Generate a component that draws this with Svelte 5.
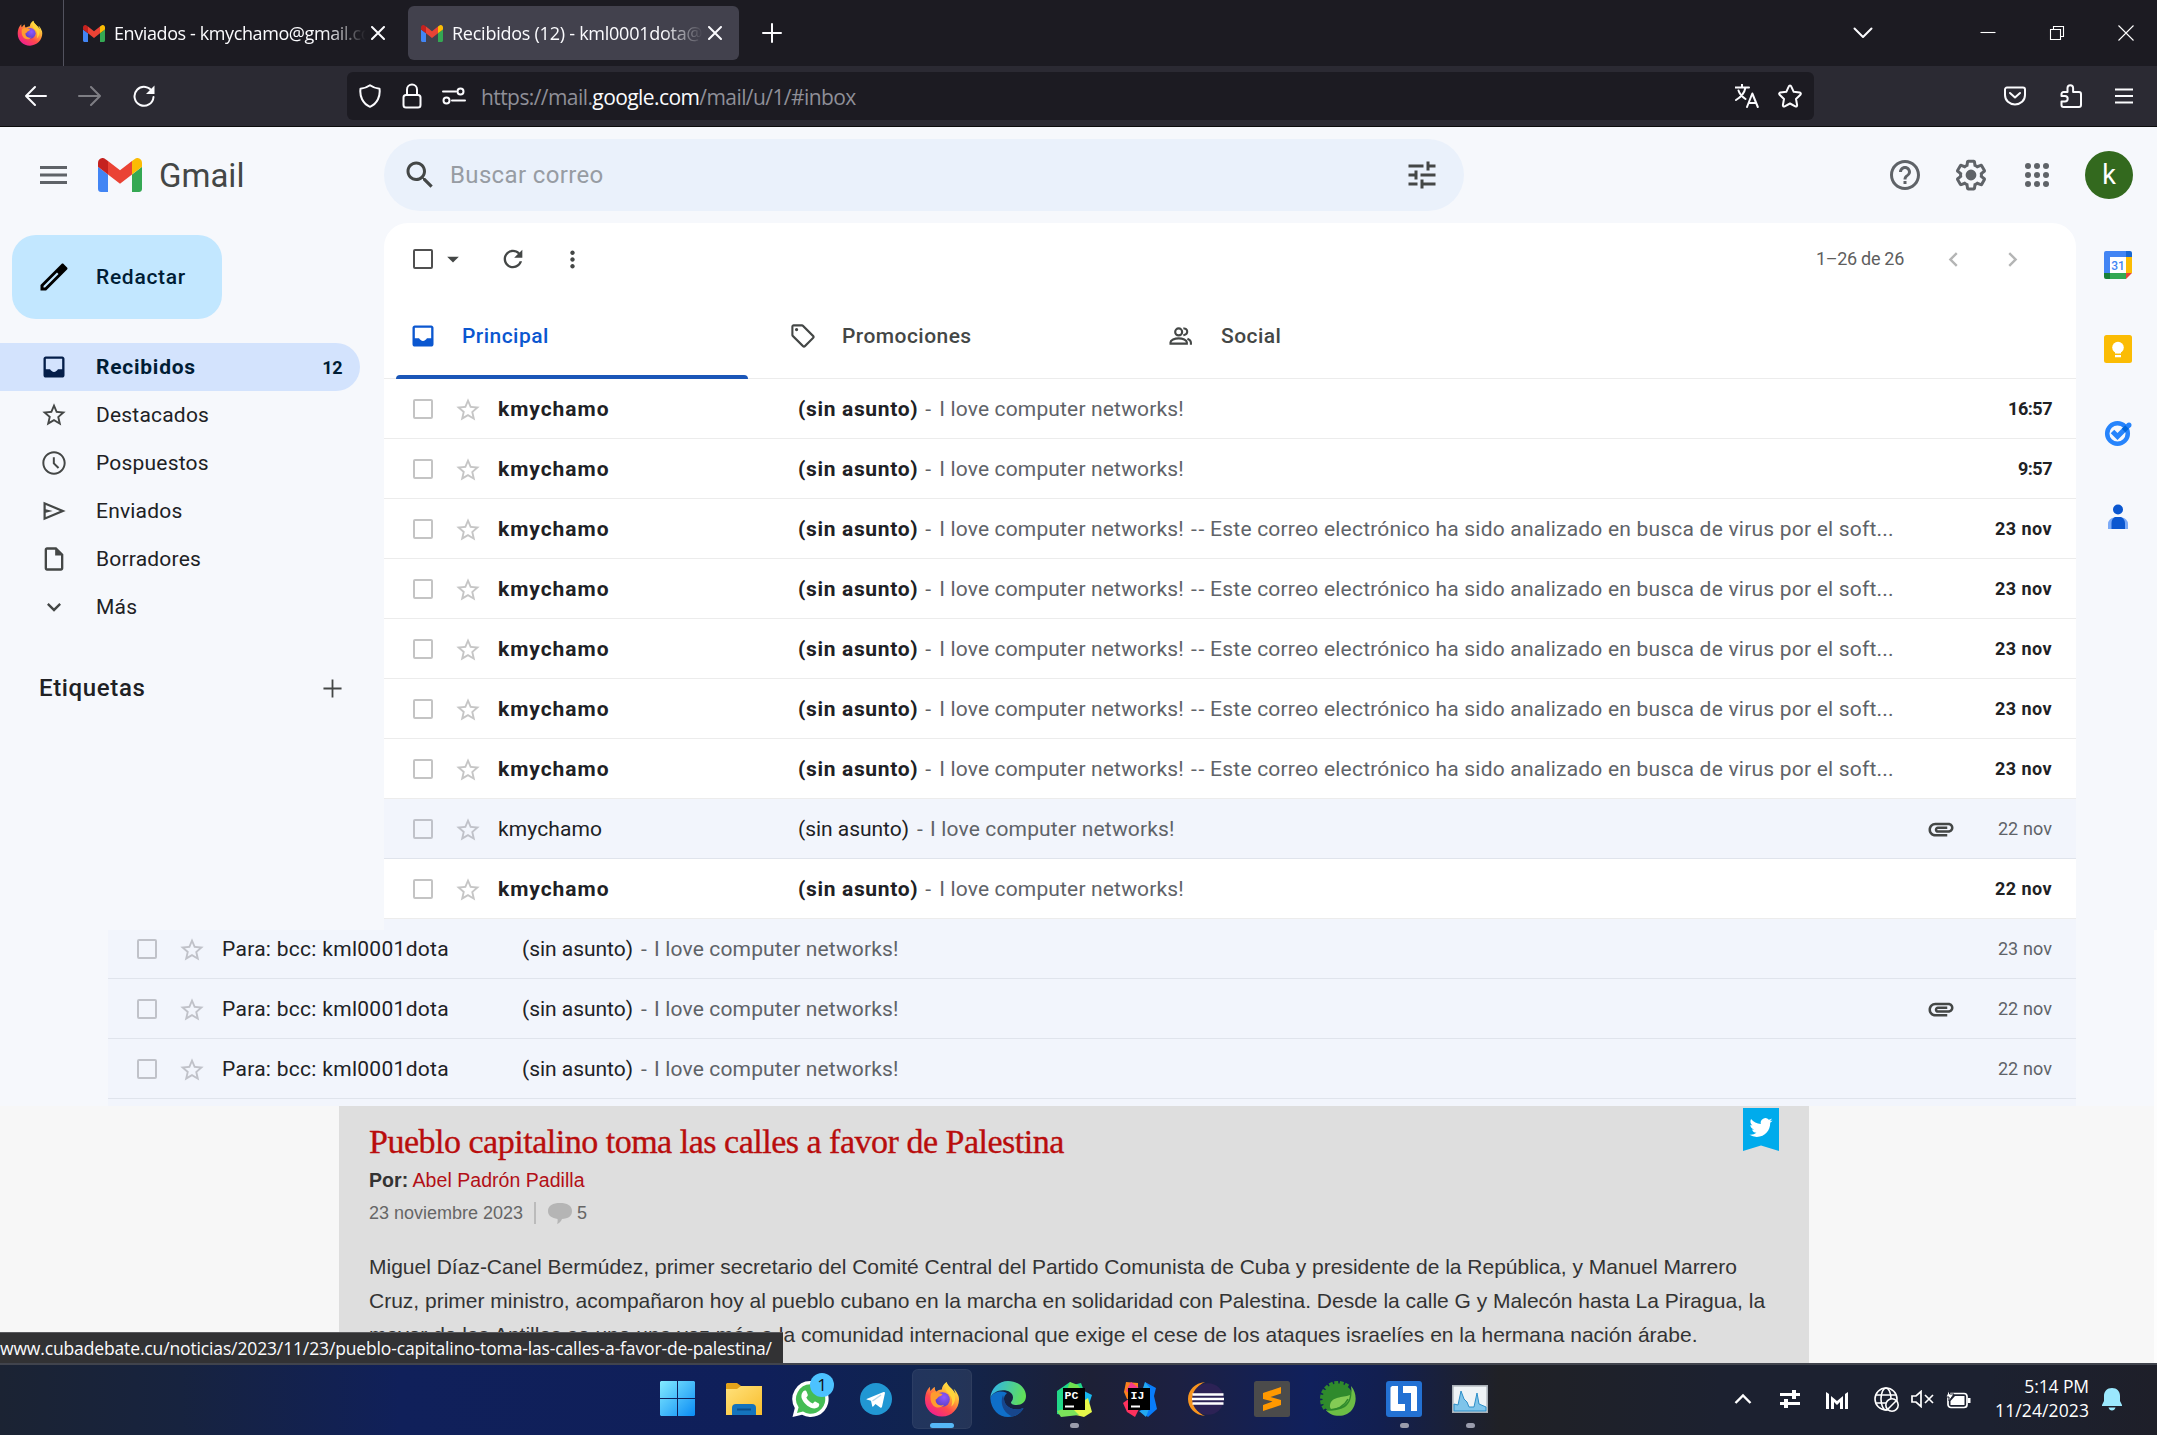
<script>
  const paths = {
    inbox: 'M19 3H5c-1.1 0-2 .9-2 2v14c0 1.1.9 2 2 2h14c1.1 0 2-.9 2-2V5c0-1.1-.9-2-2-2zM5 5h14v9h-3.6c-.7 1.3-2 2.2-3.4 2.2S9.300 15.300 8.600 14H5z',
    star: 'M22 9.240l-7.190-.62L12 2 9.190 8.630 2 9.240l5.460 4.730L5.820 21 12 17.270 18.180 21l-1.630-7.030L22 9.240zM12 15.400l-3.760 2.270 1-4.280-3.320-2.880 4.380-.38L12 6.100l1.710 4.040 4.380.38-3.320 2.880 1 4.280L12 15.400z',
    clock: 'M12 2C6.470 2 2 6.480 2 12s4.470 10 10 10 10-4.480 10-10S17.520 2 12 2zM12 20.300c-4.600 0-8.300-3.700-8.300-8.300S7.400 3.700 12 3.700s8.300 3.700 8.300 8.300-3.700 8.300-8.300 8.300zM12.700 7H11v5.600l4.300 4.300 1.200-1.200-3.800-3.800z',
    send: 'M3 4l19 8-19 8V4zm1.900 2.900v3.600l6 1.500-6 1.500v3.600L17.100 12z',
    draft: 'M14 2H6c-1.100 0-2 .9-2 2v16c0 1.100.9 2 2 2h12c1.100 0 2-.9 2-2V8l-6-6zM6 20V4h7v5h5v11H6z',
    more: 'M7.410 8.590L12 13.170l4.590-4.580L18 10l-6 6-6-6z',
    search: 'M15.500 14h-.79l-.28-.27C15.410 12.590 16 11.110 16 9.500 16 5.910 13.090 3 9.500 3S3 5.910 3 9.500 5.910 16 9.500 16c1.610 0 3.090-.59 4.230-1.570l.27.28v.79l5 4.990L20.490 19l-4.990-5zm-6 0C7.010 14 5 11.990 5 9.500S7.010 5 9.500 5 14 7.010 14 9.500 11.990 14 9.500 14z',
    tune: 'M3 17v2h6v-2H3zM3 5v2h10V5H3zm10 16v-2h8v-2h-8v-2h-2v6h2zM7 9v2H3v2h4v2h2V9H7zm14 4v-2H11v2h10zm-6-4h2V7h4V5h-4V3h-2v6z',
    help: 'M11 18h2v-2h-2v2zm1-16C6.480 2 2 6.480 2 12s4.480 10 10 10 10-4.480 10-10S17.520 2 12 2zm0 18c-4.410 0-8-3.590-8-8s3.590-8 8-8 8 3.590 8 8-3.590 8-8 8zm0-14c-2.210 0-4 1.790-4 4h2c0-1.100.9-2 2-2s2 .9 2 2c0 2-3 1.750-3 5h2c0-2.250 3-2.500 3-5 0-2.210-1.790-4-4-4z',
    gear: 'M13.850 22.250h-3.700c-.74 0-1.360-.54-1.450-1.270l-.27-1.890c-.27-.14-.53-.29-.79-.46l-1.800.72c-.7.26-1.470-.03-1.810-.65L2.200 15.530c-.35-.66-.2-1.440.36-1.880l1.530-1.190c-.01-.15-.02-.3-.02-.46 0-.15.01-.31.02-.46l-1.520-1.190c-.59-.45-.74-1.260-.37-1.880l1.850-3.190c.34-.62 1.110-.9 1.790-.63l1.810.73c.26-.17.52-.32.78-.46l.27-1.910c.09-.7.71-1.250 1.440-1.250h3.700c.74 0 1.360.54 1.450 1.270l.27 1.890c.27.14.53.29.79.46l1.800-.72c.71-.26 1.480.03 1.820.65l1.840 3.180c.36.66.2 1.440-.36 1.880l-1.520 1.190c.01.15.02.3.02.46s-.01.31-.02.46l1.520 1.190c.56.45.72 1.230.37 1.860l-1.860 3.220c-.34.62-1.110.9-1.800.63l-1.800-.72c-.26.17-.52.32-.78.46l-.27 1.910c-.1.68-.72 1.220-1.460 1.220zm-3.230-2h2.760l.37-2.550.53-.22c.44-.18.88-.44 1.340-.78l.45-.34 2.380.96 1.380-2.400-2.030-1.580.07-.56c.03-.26.06-.51.06-.78s-.03-.53-.06-.78l-.07-.56 2.030-1.580-1.390-2.400-2.390.96-.45-.35c-.42-.32-.87-.58-1.330-.77l-.52-.22-.37-2.550h-2.760l-.37 2.550-.53.21c-.44.19-.88.44-1.340.79l-.45.33-2.380-.95-1.390 2.390 2.030 1.580-.07.56a7 7 0 0 0-.06.79c0 .26.02.53.06.78l.07.56-2.030 1.580 1.380 2.400 2.390-.96.45.35c.43.33.86.58 1.330.77l.53.22.38 2.550zM15.600 12a3.600 3.600 0 1 1-7.200 0 3.600 3.600 0 0 1 7.200 0z',
    refresh: 'M17.650 6.350C16.200 4.900 14.210 4 12 4c-4.420 0-7.990 3.580-7.990 8s3.570 8 7.990 8c3.730 0 6.840-2.550 7.730-6h-2.080c-.82 2.330-3.040 4-5.650 4-3.310 0-6-2.690-6-6s2.690-6 6-6c1.660 0 3.140.69 4.220 1.780L13 11h7V4l-2.350 2.350z',
    tag: 'M21.410 11.410l-8.830-8.830c-.37-.37-.88-.58-1.410-.58H4c-1.100 0-2 .9-2 2v7.170c0 .53.21 1.040.59 1.410l8.830 8.830c.78.78 2.050.78 2.830 0l7.170-7.170c.78-.78.78-2.040-.01-2.830zM12.830 20.200L3.800 11.170V3.800h7.370l9.030 9.030zM7.900 6.500a1.400 1.400 0 1 1-2.800 0 1.400 1.400 0 0 1 2.800 0z',
    left: 'M15.410 7.410L14 6l-6 6 6 6 1.410-1.410L10.830 12z',
    right: 'M8.590 7.410L10 6l6 6-6 6-1.410-1.410L13.170 12z',
    clip: 'M2 12.500C2 9.460 4.460 7 7.500 7H18c2.210 0 4 1.790 4 4s-1.790 4-4 4H9.500C8.120 15 7 13.880 7 12.500S8.120 10 9.500 10H17v2H9.410c-.55 0-.55 1 0 1H18c1.100 0 2-.9 2-2s-.9-2-2-2H7.500C5.570 9 4 10.570 4 12.500S5.570 16 7.500 16H17v2H7.500C4.460 18 2 15.540 2 12.500z',
    pencil: 'M3 17.250V21h3.750L20.700 7.050c.4-.4.4-1 0-1.400l-2.300-2.300c-.4-.4-1-.4-1.400 0L3 17.250zm3 1.700H5v-1l9-9 1 1-9 9z',
    plus: 'M19 12.700h-6.300V19h-1.400v-6.300H5v-1.400h6.300V5h1.400v6.300H19z',
    caret: 'M7 10l5 5 5-5z',
    dots: 'M12 8c1.100 0 2-.9 2-2s-.9-2-2-2-2 .9-2 2 .9 2 2 2zm0 2c-1.100 0-2 .9-2 2s.9 2 2 2 2-.9 2-2-.9-2-2-2zm0 6c-1.100 0-2 .9-2 2s.9 2 2 2 2-.9 2-2-.9-2-2-2z'
  };

  const folders = [
    { icon: 'inbox', label: 'Recibidos', count: 12, active: true },
    { icon: 'star', label: 'Destacados' },
    { icon: 'clock', label: 'Pospuestos' },
    { icon: 'send', label: 'Enviados' },
    { icon: 'draft', label: 'Borradores' },
    { icon: 'more', label: 'Más' }
  ];

  const love = 'I love computer networks!';
  const scan = 'Este correo electrónico ha sido analizado en busca de virus por el soft...';
  const inbox = [
    { date: '16:57', today: true },
    { date: '9:57', today: true },
    { tail: scan, date: '23 nov' },
    { tail: scan, date: '23 nov' },
    { tail: scan, date: '23 nov' },
    { tail: scan, date: '23 nov' },
    { tail: scan, date: '23 nov' },
    { date: '22 nov', read: true, clip: true },
    { date: '22 nov' }
  ].map((m) => ({ ...m, from: 'kmychamo', text: love }));
  const sent = [
    { date: '23 nov' },
    { date: '22 nov', clip: true },
    { date: '22 nov' }
  ].map((m) => ({ ...m, from: 'Para: bcc: kml0001dota', text: love, read: true }));

  const dotGrid = [3, 12, 21];
  const teeth = Array.from({ length: 9 }, (_, i) => 150 + i * 19);
</script>

{#snippet icon(name, size)}
  <svg width={size} height={size} viewBox="0 0 24 24" fill="currentColor" fill-rule="evenodd"><path d={paths[name]} /></svg>
{/snippet}

{#snippet gmail(w, h)}
  <svg width={w} height={h} viewBox="52 42 88 66" preserveAspectRatio="none">
    <path fill="#4285f4" d="M58 108h14V74L52 59v43c0 3.320 2.690 6 6 6" />
    <path fill="#34a853" d="M120 108h14c3.320 0 6-2.690 6-6V59l-20 15" />
    <path fill="#fbbc04" d="M120 48v26l20-15v-8c0-7.420-8.470-11.650-14.400-7.200" />
    <path fill="#ea4335" d="M72 74V48l24 18 24-18v26L96 92" />
    <path fill="#c5221f" d="M52 51v8l20 15V48l-5.600-4.200c-5.940-4.450-14.400-.22-14.400 7.200" />
  </svg>
{/snippet}

{#snippet firefox(size, id)}
  <svg width={size} height={size} viewBox="0 0 36 36">
    <defs>
      <linearGradient id={id + 'a'} x1=".85" y1=".1" x2=".25" y2=".95">
        <stop offset="0" stop-color="#fff44f" /><stop offset=".35" stop-color="#ffa436" />
        <stop offset=".65" stop-color="#ff4a4c" /><stop offset="1" stop-color="#f0218b" />
      </linearGradient>
      <radialGradient id={id + 'b'} cx=".6" cy=".35" r=".7">
        <stop offset="0" stop-color="#9059ff" /><stop offset="1" stop-color="#5b3fc4" />
      </radialGradient>
    </defs>
    <path fill="url(#{id}a)" d="M33.500 13c-.8-2-2.500-4.200-3.800-4.900 1 2 1.600 3.500 1.700 4.700C29 7.500 24 6.200 22.500 1c-3 2-4.500 5-4.700 7.500-2.200.1-4 .8-5.500 1.900-1-.5-1.800-2.400-1.300-4.300C8.800 7 7.300 9 6.600 10c-.8-1-.7-3.400-.5-4.200C4 7.400 1 12 1 19c0 9.400 7.600 16.500 17 16.500S35 28 35 18.500c0-2-.5-4-1.500-5.500z" />
    <circle cx="18.500" cy="18.500" r="7.300" fill="url(#{id}b)" />
    <path fill="#ff9b2f" d="M7 12.500c2-1.800 4.500-1.600 6.500-.8 2.200.4 3.800 1 5 1.500-.4 1.300-2 1.800-3.500 2.300-1.200.6-1.600 2.600-3.500 3.300 0 4.500 4.500 7 8.500 5-2 3.200-8 4-11 .5-2.600-3-3.200-8-2-11.800z" />
    <path fill="#ffd43a" d="M22.500 1c1.500 5.200 6.500 6.500 8.300 12.500 1.200 4.500-.3 9.500-3.500 12 1.600-4 1.200-8.500-1.500-11.500-3-3.200-6.500-6.500-3.300-13z" />
  </svg>
{/snippet}

{#snippet row(m)}
  <div class="row" class:read={m.read}>
    <span class="box"></span>
    <span class="rowstar">{@render icon('star', 28)}</span>
    <span class="from">{m.from}</span>
    <span class="subject"><b>(sin asunto)</b><i>-</i><span>{m.text}</span>{#if m.tail}<em>--</em><span>{m.tail}</span>{/if}</span>
    <span class="attach">{#if m.clip}{@render icon('clip', 30)}{/if}</span>
    <span class="date" class:today={m.today}>{m.date}</span>
  </div>
{/snippet}

<div class="screen">
  <div class="tabbar">
    <div class="pinned">{@render firefox(26, 'ffs')}</div>
    <div class="tab first">
      {@render gmail(22, 17)}
      <span class="title">Enviados - kmychamo@gmail.com</span>
      <svg width="14" height="14" viewBox="0 0 14 14"><path class="line" d="M1 1l12 12M13 1L1 13" /></svg>
    </div>
    <div class="tab selected">
      {@render gmail(22, 17)}
      <span class="title">Recibidos (12) - kml0001dota@gmail</span>
      <svg width="14" height="14" viewBox="0 0 14 14"><path class="line" d="M1 1l12 12M13 1L1 13" /></svg>
    </div>
    <svg class="newtab" width="20" height="20" viewBox="0 0 20 20"><path class="line" d="M10 1v18M1 10h18" /></svg>
    <div class="wincontrols">
      <svg width="20" height="20" viewBox="0 0 20 20"><path class="line" d="M1.500 5.500l8.500 8.500 8.500-8.500" /></svg>
      <svg width="16" height="16" viewBox="0 0 16 16"><path class="thin" d="M.5 7.500h15" /></svg>
      <svg width="16" height="16" viewBox="0 0 16 16"><path class="thin" d="M1.500 4.500h10v10h-10zM4.500 4V1.500h10v10H12" /></svg>
      <svg width="16" height="16" viewBox="0 0 16 16"><path class="thin" d="M.5.5l15 15M15.500.5l-15 15" /></svg>
    </div>
  </div>

  <div class="navbar">
    <div class="navbuttons">
      <svg width="24" height="24" viewBox="0 0 24 24"><path class="line" d="M22 12H2M11 3l-9 9 9 9" /></svg>
      <svg class="off" width="24" height="24" viewBox="0 0 24 24"><path class="line" d="M1 12h21M13 3l9 9-9 9" /></svg>
      <svg width="24" height="24" viewBox="0 0 24 24"><path class="line" d="M20.500 8A9.500 9.500 0 1 0 21.500 13" /><path fill="#fbfbfe" d="M22.500 1.500v8.500H14z" /></svg>
    </div>
    <div class="urlbar">
      <svg width="24" height="24" viewBox="0 0 24 24"><path class="line" d="M12 1.200C9.500 3 6 4.300 2.500 4.700 1.500 12 4.500 19.500 12 22.800 19.500 19.500 22.500 12 21.500 4.700 18 4.300 14.500 3 12 1.200z" /></svg>
      <svg width="20" height="26" viewBox="0 0 20 26"><rect class="line" x="1.500" y="12" width="17" height="12.500" rx="2.500" /><path class="line" d="M5 12V6.500a5 5 0 0 1 10 0V12" /></svg>
      <svg width="24" height="18" viewBox="0 0 24 18"><path class="line" d="M1 4.500h13M10 13.500h13" /><circle class="line" cx="18.500" cy="4.500" r="3" /><circle class="line" cx="4.500" cy="13.500" r="3" /></svg>
      <span class="url">https://mail.<b>google.com</b>/mail/u/1/#inbox</span>
      <svg width="24" height="24" viewBox="0 0 24 24"><path class="line" d="M0 3.500h14M7 .5v3M10.500 3.500C9.500 9 6 13 1 16M3.500 6.500c1 3.500 4 6.500 7 8.500" /><path class="line" d="M12 23l5.300-13.500L22.800 23M13.700 19h7.300" /></svg>
      <svg width="24" height="24" viewBox="0 0 24 24"><path class="line" d="M12 1.500c.6 0 1 .4 1.200.9l2.500 5.400 6 .8c1.200.2 1.500 1.300.7 2.100L18 15l1.100 6c.2 1.200-.8 1.900-1.800 1.400L12 19.500l-5.300 2.900c-1 .5-2-.2-1.800-1.400L6 15l-4.400-4.300c-.8-.8-.5-1.900.7-2.100l6-.8 2.500-5.400c.2-.5.600-.9 1.200-.9z" /></svg>
    </div>
    <div class="navtools">
      <svg width="24" height="20" viewBox="0 0 24 20"><path class="line" d="M4 1.500h16a2 2 0 0 1 2 2V9c0 5.500-4.500 9.500-10 9.500S2 14.500 2 9V3.500a2 2 0 0 1 2-2zM7 7l5 4.500L17 7" /></svg>
      <svg width="22" height="24" viewBox="0 0 22 24"><path class="line" d="M3.500 8h4V4a2.800 2.800 0 0 1 5.600 0v4H19a2 2 0 0 1 2 2v11a2 2 0 0 1-2 2H3.500a2 2 0 0 1-2-2v-3.500H5a2.700 2.700 0 0 0 0-5.400H1.500V10a2 2 0 0 1 2-2z" /></svg>
      <svg width="18" height="16" viewBox="0 0 18 16"><path class="line" d="M0 1.500h18M0 8h18M0 14.500h18" /></svg>
    </div>
  </div>

  <div class="mail">
    <header>
      <svg class="burger" width="27" height="18" viewBox="0 0 27 18"><path fill="#5f6368" d="M0 0h27v3H0zM0 7.500h27v3H0zM0 15h27v3H0z" /></svg>
      <span class="logo">{@render gmail(44, 34)}</span>
      <span class="brand">Gmail</span>
      <div class="search">
        {@render icon('search', 36)}
        <span class="hint">Buscar correo</span>
        {@render icon('tune', 36)}
      </div>
      <div class="account">
        {@render icon('help', 36)}
        {@render icon('gear', 36)}
        <svg width="24" height="24" viewBox="0 0 24 24" fill="#5f6368">
          {#each dotGrid as y}{#each dotGrid as x}<circle cx={x} cy={y} r="3" />{/each}{/each}
        </svg>
        <span class="avatar">k</span>
      </div>
    </header>

    <div class="body">
      <aside>
        <button class="compose">{@render icon('pencil', 36)}<span>Redactar</span></button>
        <nav>
          {#each folders as f}
            <div class="folder" class:active={f.active}>
              <span class="ficon">{@render icon(f.icon, 28)}</span>
              <span class="fname">{f.label}</span>
              {#if f.count}<span class="count">{f.count}</span>{/if}
            </div>
          {/each}
        </nav>
        <div class="labels"><span>Etiquetas</span>{@render icon('plus', 31)}</div>
      </aside>

      <main>
        <div class="toolbar">
          <span class="box"></span>
          <span class="tcaret">{@render icon('caret', 28)}</span>
          <span class="trefresh">{@render icon('refresh', 28)}</span>
          <span class="tdots">{@render icon('dots', 27)}</span>
          <span class="range">1–26 de 26</span>
          {@render icon('left', 29)}
          {@render icon('right', 29)}
        </div>
        <div class="categories">
          <div class="category current">{@render icon('inbox', 28)}<span>Principal</span></div>
          <div class="category">{@render icon('tag', 28)}<span>Promociones</span></div>
          <div class="category">
            <svg width="28" height="28" viewBox="0 0 24 24" fill="none" stroke="currentColor" stroke-width="1.800"><circle cx="10" cy="8.500" r="3" /><path d="M3 18.500v-1.200c0-1.800 3.500-3.300 7-3.300s7 1.500 7 3.300v1.200zM14 5.600c3.800-.8 5 4.900 0 5.800M17.500 14.300c2.500 1 3 2 3 3.500v1.600" /></svg>
            <span>Social</span>
          </div>
        </div>
        {#each inbox as m}{@render row(m)}{/each}
      </main>

      <div class="sidepanel">
        <svg width="28" height="28" viewBox="0 0 28 28">
          <path fill="#4285f4" d="M2 0h20v6H6v16H0V2a2 2 0 0 1 2-2z" /><path fill="#1967d2" d="M22 0h4a2 2 0 0 1 2 2v4h-6z" />
          <path fill="#fbbc04" d="M22 6h6v16h-6z" /><path fill="#34a853" d="M6 22h16v6H6z" /><path fill="#188038" d="M0 22h6v6H2a2 2 0 0 1-2-2z" />
          <path fill="#ea4335" d="M22 28l6-6h-6z" /><path fill="#fff" d="M6 6h16v16H6z" />
          <text class="cal" x="14" y="18.500" text-anchor="middle">31</text>
        </svg>
        <svg width="28" height="28" viewBox="0 0 28 28"><rect width="28" height="28" rx="2.500" fill="#fbbc04" /><circle cx="14" cy="12.500" r="5.800" fill="#fff" /><path fill="#fff" d="M11 15h6v3.500h-6zM11 20h6v2.300h-6z" /></svg>
        <svg width="28" height="28" viewBox="0 0 28 28"><circle cx="13.500" cy="14.500" r="10.300" fill="none" stroke="#2684fc" stroke-width="4.500" /><path fill="none" stroke="#2684fc" stroke-width="5" d="M8.500 12.500l5 5L25 6" /><path fill="none" stroke="#0066da" stroke-width="5" d="M19.500 11.500L23 8" /><circle cx="25" cy="6" r="2.500" fill="#2684fc" /></svg>
        <svg width="28" height="28" viewBox="0 0 28 28"><circle cx="14" cy="6.500" r="5" fill="#0b57d0" /><path fill="#7baaf7" d="M4 26v-5a6.500 6.500 0 0 1 6.500-6.500h7A6.500 6.500 0 0 1 24 21v5z" /><path fill="#0b57d0" d="M7.500 26v-6a7 7 0 0 1 3.500-6h6a7 7 0 0 1 4 6v6z" /></svg>
      </div>
    </div>

    <div class="sent">
      {#each sent as m}{@render row(m)}{/each}
      <div class="sliver"></div>
    </div>
  </div>

  <div class="news">
    <article>
      <h1>Pueblo capitalino toma las calles a favor de Palestina</h1>
      <p class="by"><b>Por:</b> <a href="#autor">Abel Padrón Padilla</a></p>
      <p class="meta">
        <span class="day">23 noviembre 2023</span><span class="bar"></span>
        <svg width="24" height="21" viewBox="0 0 24 21"><path fill="#b5b5b5" d="M12 0c7 0 12 2.500 12 8s-4 7.500-10 8c-1 2.500-2.500 4-5 5 .7-1.700.8-3.200.5-5C4 15 0 13 0 8 0 2.500 5 0 12 0z" /></svg>
        <span>5</span>
      </p>
      <div class="lead">
        <p>Miguel Díaz-Canel Bermúdez, primer secretario del Comité Central del Partido Comunista de Cuba y presidente de la República, y Manuel Marrero</p>
        <p>Cruz, primer ministro, acompañaron hoy al pueblo cubano en la marcha en solidaridad con Palestina. Desde la calle G y Malecón hasta La Piragua, la</p>
        <p>mayor de las Antillas se une una vez más a la comunidad internacional que exige el cese de los ataques israelíes en la hermana nación árabe.</p>
      </div>
      <svg class="ribbon" width="36" height="43" viewBox="0 0 36 43"><path fill="#00abec" d="M0 0h36v43l-18-5.500L0 43z" /><path fill="#fff" transform="translate(6.500 8) scale(.96)" d="M23.950 4.570a10 10 0 0 1-2.820.77 4.960 4.960 0 0 0 2.160-2.720c-.95.55-2 .95-3.130 1.180a4.920 4.920 0 0 0-8.380 4.480C7.690 8.090 4.070 6.130 1.640 3.160a4.820 4.820 0 0 0-.67 2.480c0 1.710.87 3.210 2.190 4.100a4.900 4.900 0 0 1-2.230-.62v.06a4.920 4.920 0 0 0 3.950 4.830 5 5 0 0 1-2.210.08 4.940 4.940 0 0 0 4.600 3.420A9.870 9.870 0 0 1 0 19.540a14 14 0 0 0 7.550 2.210c9.050 0 14-7.500 14-13.980 0-.21 0-.42-.02-.63a9.940 9.940 0 0 0 2.460-2.550z" /></svg>
    </article>
    <div class="status">www.cubadebate.cu/noticias/2023/11/23/pueblo-capitalino-toma-las-calles-a-favor-de-palestina/</div>
  </div>
  <div class="edge"></div>

  <div class="taskbar">
    <div class="apps">
      <div class="app">
        <svg width="36" height="36" viewBox="0 0 36 36"><defs><linearGradient id="win" x1="0" y1="0" x2="1" y2="1"><stop offset="0" stop-color="#83ebff" /><stop offset="1" stop-color="#0a8cf5" /></linearGradient></defs><path fill="url(#win)" d="M1 0h16v17H0V1zM18 0h16l1 1v16H18zM0 18h17v17H1l-1-1zM18 18h17v16l-1 1H18z" /></svg>
      </div>
      <div class="app">
        <svg width="36" height="34" viewBox="0 0 36 34"><defs><linearGradient id="fold" x1="0" y1="0" x2="1" y2="1"><stop offset="0" stop-color="#ffe27c" /><stop offset="1" stop-color="#f9bd2c" /></linearGradient></defs><path fill="#e3a21a" d="M1 1h10l4 3v5H0V2z" /><path fill="url(#fold)" d="M0 7h11l4-3h21v29H0z" /><path fill="#1473bd" d="M6 33V26a4 4 0 0 1 4-4h16a4 4 0 0 1 4 4v7z" /><path stroke="#0a4f8c" stroke-width="2" d="M11 27.500h14" /></svg>
      </div>
      <div class="app">
        <svg width="37" height="36" viewBox="0 0 37 36"><path fill="#fff" d="M18.500 0a18 18 0 1 1-8.500 33.800L.5 36l2.300-9A18 18 0 0 1 18.500 0z" /><path fill="#45bd55" d="M18.500 3.300a14.700 14.700 0 1 1-7.500 27.300l-6 1.400 1.600-5.700A14.700 14.700 0 0 1 18.500 3.300z" /><path fill="#fff" d="M13 9.500c.7 0 1.200.2 1.500 1l1.300 3.200c.3.800-.5 1.700-1.500 2.900 1.500 2.800 3.500 4.700 6.600 6 1-1.200 1.500-2.300 2.300-2l3.600 1.800c1 .5.300 3-.8 3.900-4.500 3.500-13-1.500-16-8.300-1.700-3.900.8-8.500 3-8.500z" /></svg>
        <span class="badge">1</span>
      </div>
      <div class="app">
        <svg width="32" height="32" viewBox="0 0 32 32"><circle cx="16" cy="16" r="16" fill="#2197d3" /><path fill="#fff" d="M6.500 16L23.500 9c1-.3 1.700.2 1.400 1.400L22 23.700c-.3 1-1 1.200-1.800.7L15.500 21l-2.300 2.400c-.5.400-.9.300-1-.4l-1.200-5.200-4.400-1.300z" /><path stroke="#b8d9ec" stroke-width="1.500" d="M12.500 18L21 12" /></svg>
      </div>
      <div class="app focus">{@render firefox(36, 'ffl')}<span class="run on"></span></div>
      <div class="app">
        <svg width="36" height="36" viewBox="0 0 36 36"><defs><linearGradient id="ed1" x1="0" y1=".3" x2="1" y2=".5"><stop offset="0" stop-color="#2fb3ea" /><stop offset="1" stop-color="#62e155" /></linearGradient></defs><path fill="#0f6fc9" d="M.3 17C1 29 9 36 18 36c7 0 13-3.500 15.500-9-2 .8-4 1.500-6.500 1.500C20 28.500 14 24 14 18c0-3 1.500-4.500 3-6C10 9 3 11 .3 17z" /><path fill="#17468c" d="M13 14c-3 7-1 17 9 21.500 5-1 9.500-4 11.500-8.500-9 4-19-1-19.500-9z" /><path fill="url(#ed1)" d="M.3 17C1 7 9 0 18 0c10 0 18 7 18 15 0 6-4.500 9-9.500 9-4 0-5.500-1.600-5.500-2.600 0-.9 2-1.900 2-5C23 12 18.500 9.300 13 9.300 7 9.300 2 12.500.3 17z" /></svg>
      </div>
      <div class="app">
        <svg width="36" height="36" viewBox="0 0 36 36"><path fill="#21d789" d="M1 10L14 1l3 3 8-2 3 8-9 24H6L1 33z" /><path fill="#17b8f0" d="M28 10l8 4-3 9-8-6z" /><path fill="#6fe04f" d="M14 1l8 3 5 7H10z" /><path fill="#e6f84a" d="M20 25l12-8 4 14-8 5-12-3z" /><path fill="#7be35a" d="M1 30l14-4 8 8-18 2z" /><path d="M7 7h22v22H7z" /><path fill="#fff" d="M9 24.500h9v2H9z" /><text class="ide" x="8.500" y="17.500">PC</text></svg>
        <span class="run"></span>
      </div>
      <div class="app">
        <svg width="34" height="36" viewBox="0 0 34 36"><path fill="#fc801d" d="M3 1l12 1v16H4L1 11z" /><path fill="#fe315d" d="M0 22l14-10 4 12-6 12-8-5z" /><path fill="#f53a8d" d="M8 1l9 7-6 7-8-5z" /><path fill="#087cfa" d="M22 1l11 6-2 8 3 13-9 8-8-7z" /><path fill="#24a8f0" d="M22 1l5 6-8 3zM16 30l10-2-3 8z" /><path d="M5 7h22v22H5z" /><path fill="#fff" d="M8 24.500h9v2H8z" /><text class="ide" x="7.500" y="17.500">IJ</text></svg>
      </div>
      <div class="app">
        <svg width="36" height="34" viewBox="0 0 36 34"><path fill="#f7941e" d="M17 0C7 1 0 8 0 17s7 16 17 17C10 31 6 25 6 17S10 3 17 0z" /><circle cx="20" cy="17" r="15.800" fill="#2c2255" /><path stroke="#fff" stroke-width="2.300" d="M4.500 12.500h31M4 17h32M4.500 21.500h31" /></svg>
      </div>
      <div class="app">
        <svg width="36" height="36" viewBox="0 0 36 36"><rect width="36" height="36" rx="2.500" fill="#4b4b4b" /><path fill="#ff9800" d="M9 12l18-6v6.500L16.500 16l10.500 3v5L9 30v-6l9.500-3.500L9 18z" /></svg>
      </div>
      <div class="app">
        <svg width="36" height="36" viewBox="0 0 36 36"><g fill="#2f8a2c">{#each teeth as t}<rect x="31" y="16" width="5" height="4" transform="rotate({t} 18 18)" />{/each}<circle cx="18" cy="18" r="15.500" /></g><path fill="#6cbd45" d="M31 5c8 9 5 24-4 28-8 4-18 1-21-4 7 1 14 0 19-3C32 21 32 12 31 5z" /><path fill="#83cb55" d="M30 14c-8 3-18 1-20 10-.3 2 .3 3 1 4 10-1 18-4 19-14z" /><path fill="none" stroke="#2f8a2c" stroke-width="1.500" d="M7 29c9 0 17-3 21-11" /></svg>
      </div>
      <div class="app">
        <svg width="36" height="36" viewBox="0 0 36 36"><rect width="36" height="36" rx="3" fill="#2371d3" /><path fill="#fff" d="M6 5h6v18h7v7H6a1.500 1.500 0 0 1-1.500-1.500v-22zM17 5h12.500a1.500 1.500 0 0 1 1.500 1.500V30h-6V12h-8z" /></svg>
        <span class="run"></span>
      </div>
      <div class="app">
        <svg width="36" height="28" viewBox="0 0 36 28"><rect x=".8" y=".8" width="34.400" height="26.400" fill="#eef3f6" stroke="#aab1b8" stroke-width="1.600" /><path fill="#7fc4ea" stroke="#2d8fc9" d="M2 19l4 1 3-14 3 8 3 3 2 5h5l3-14 2 11 7 3v4H2z" /></svg>
        <span class="run"></span>
      </div>
    </div>
    <div class="tray">
      <svg width="18" height="12" viewBox="0 0 18 12"><path class="bold" d="M1.500 10L9 2.500l7.500 7.500" /></svg>
      <svg width="20" height="18" viewBox="0 0 20 18"><path fill="#fff" d="M0 3h20v3H0zM0 12h20v3H0zM12 0h4v9h-4zM4 9h4v9H4z" /></svg>
      <svg width="22" height="17" viewBox="0 0 22 17"><path fill="#fff" d="M0 0l3 2v15H0zM22 0l-3 2v15h3zM5 4l6 5 6-5v13h-3V10l-3 3-3-3v7H5z" /></svg>
      <svg width="25" height="25" viewBox="0 0 25 25" fill="none" stroke="#fff" stroke-width="1.600"><circle cx="12" cy="12" r="11" /><ellipse cx="12" cy="12" rx="5" ry="11" /><path d="M2 8h20M2 16h20" /><circle cx="18" cy="18" r="6.200" fill="#1c2130" /><path d="M14 22l8-8" /></svg>
      <svg width="23" height="18" viewBox="0 0 23 18" fill="none" stroke="#fff" stroke-width="1.700"><path d="M1 6h4l5-4.500v15L5 12H1zM14 5l8 8M22 5l-8 8" /></svg>
      <svg width="25" height="20" viewBox="0 0 25 20"><rect x="2" y="4.500" width="19" height="14" rx="3" fill="none" stroke="#fff" stroke-width="1.700" /><path fill="#fff" d="M9 7h9.500v9h-14v-4zM22 9h2.500v5H22z" /><path fill="#fff" stroke="#1c2130" d="M3.500 0v5H8l-5 7V8H0z" /></svg>
      <div class="clocktext"><span>5:14 PM</span><span class="day2">11/24/2023</span></div>
      <svg width="20" height="23" viewBox="0 0 20 23"><path fill="#9be8fd" d="M10 0c5 0 8 3.500 8 8v5l2 4v1H0v-1l2-4V8c0-4.500 3-8 8-8zM6.500 19.500h7c-.5 2-1.800 3-3.500 3s-3-1-3.500-3z" /></svg>
    </div>
  </div>
</div>

<style>
  :global(body) { margin: 0; overflow: hidden; }
  .screen { width: 2157px; height: 1435px; display: flex; flex-direction: column; position: relative; overflow: hidden; font-family: Roboto, "Liberation Sans", sans-serif; background: #f6f8fc; }
  svg { display: block; flex: none; }
  p, h1 { margin: 0; }
  .line { fill: none; stroke: #fbfbfe; stroke-width: 2; stroke-linecap: round; stroke-linejoin: round; }
  .thin { fill: none; stroke: #fff; stroke-width: 1.1; }
  .bold { fill: none; stroke: #fff; stroke-width: 2.4; }

  .tabbar { height: 66px; flex: none; background: #1c1b22; display: flex; align-items: center; color: #fbfbfe; font-family: "Open Sans", "Noto Sans", sans-serif; font-size: 18px; }
  .pinned { width: 46px; height: 66px; padding-left: 17px; border-right: 1px solid #52525e; display: flex; align-items: center; }
  .tab { box-sizing: border-box; height: 54px; display: flex; align-items: center; padding: 0 17px 0 12px; }
  .tab .title { flex: 1; margin: 0 5px 0 9px; width: 0; overflow: hidden; white-space: nowrap; letter-spacing: -.4px; mask-image: linear-gradient(90deg, #000 84%, transparent); }
  .tab.first { width: 338px; margin-left: 7px; padding-right: 24px; }
  .tab.selected { width: 331px; margin-left: -1px; padding-left: 13px; background: #42414d; border-radius: 6px; }
  .selected .title { letter-spacing: -.25px; }
  .newtab { margin-left: 23px; }
  .wincontrols { margin-left: auto; display: flex; align-items: center; margin-right: 23px; }
  .wincontrols svg:nth-child(2) { margin-left: 107px; }
  .wincontrols svg:nth-child(n + 3) { margin-left: 53px; }

  .navbar { height: 60px; flex: none; background: #2b2a33; border-bottom: 1px solid #0c0c0d; display: flex; align-items: center; }
  .navbuttons { width: 347px; display: flex; gap: 30px; padding-left: 24px; box-sizing: border-box; }
  .off { opacity: .4; }
  .urlbar { width: 1467px; height: 48px; box-sizing: border-box; background: #1c1b22; border-radius: 6px; display: flex; align-items: center; padding: 0 12px 0 11px; }
  .urlbar svg:nth-child(2) { margin-left: 20px; }
  .urlbar svg:nth-child(3) { margin-left: 20px; }
  .urlbar svg:last-child { margin-left: 19px; }
  .url { flex: 1; margin: 2px 0 0 15px; font: 21px "Open Sans", "Noto Sans", sans-serif; letter-spacing: -.58px; color: #8f8f98; }
  .url b { font-weight: 400; color: #fbfbfe; }
  .navtools { margin-left: auto; margin-right: 24px; display: flex; align-items: center; gap: 33px; }

  .mail { height: 979px; flex: none; position: relative; }
  header { height: 96px; display: flex; align-items: center; color: #5f6368; }
  .burger { margin-left: 40px; }
  .logo { margin-left: 31px; }
  .brand { width: 242px; padding-left: 17px; box-sizing: border-box; font-size: 33px; letter-spacing: 0; color: #444746; }
  .search { width: 1080px; height: 72px; box-sizing: border-box; border-radius: 36px; background: #eaf1fb; color: #444746; display: flex; align-items: center; padding: 0 24px 0 18px; }
  .hint { flex: 1; margin-left: 12px; font-size: 24px; letter-spacing: .35px; color: #979ca3; }
  .account { margin-left: auto; margin-right: 24px; display: flex; align-items: center; gap: 30px; }
  .account svg:nth-child(3) { margin: 0 6px 0 6px; }
  .avatar { width: 48px; height: 48px; border-radius: 50%; background: #33691e; color: #fff; font-size: 27px; line-height: 48px; text-align: center; }

  .body { display: flex; height: 696px; }
  aside { width: 384px; }
  .compose { margin: 12px 0 0 12px; width: 210px; height: 84px; border: 0; border-radius: 24px; background: #c2e7ff; padding: 0 0 0 24px; display: flex; align-items: center; font: 500 21px Roboto, sans-serif; color: #001d35; }
  .compose svg { color: #000; }
  .compose span { margin-left: 24px; letter-spacing: .7px; }
  nav { margin-top: 24px; width: 360px; }
  .folder { height: 48px; display: flex; align-items: center; color: #202124; font-size: 21px; letter-spacing: .2px; }
  .ficon { margin-left: 40px; color: #444746; }
  .fname { margin-left: 28px; flex: 1; }
  .active { background: #d3e3fd; border-radius: 0 24px 24px 0; color: #001d35; font-weight: 700; letter-spacing: .75px; }
  .active .ficon { color: #041e49; }
  .count { font-size: 18px; margin-right: 18px; letter-spacing: -.5px; }
  .labels { margin: 41px 36px 0 39px; display: flex; justify-content: space-between; align-items: center; height: 32px; font-size: 24px; font-weight: 500; letter-spacing: .65px; color: #202124; }
  .labels svg { color: #444746; }

  main { width: 1692px; background: #fff; border-radius: 24px 24px 0 0; overflow: hidden; }
  .box { width: 16px; height: 16px; border: 2px solid #c4c4c4; border-radius: 2px; flex: none; }
  .toolbar { height: 72px; display: flex; align-items: center; padding-left: 29px; color: #444746; }
  .toolbar .box { border-color: #505050; }
  .tcaret { margin-left: 6px; }
  .trefresh { margin-left: 32px; }
  .tdots { margin-left: 32px; }
  .range { margin-left: auto; margin-top: -1px; font-size: 18px; letter-spacing: -.3px; color: #5e5e5e; }
  .toolbar > :global(svg) { color: #b4b5b5; margin-left: 35px; }
  .toolbar > :global(svg:last-child) { margin-left: 30px; margin-right: 49px; }
  .categories { height: 83px; border-bottom: 1px solid #ececec; display: flex; padding-left: 12px; }
  .category { box-sizing: border-box; width: 352px; margin-right: 27px; height: 83px; display: flex; align-items: center; padding: 0 0 1px 13px; font-size: 21px; font-weight: 500; color: #444746; letter-spacing: .45px; }
  .category span { margin-left: 25px; }
  .category:nth-child(2) { padding-left: 14px; }
  .category:nth-child(3) span { margin-left: 26px; }
  .current { color: #0b57d0; position: relative; }
  .current::after { content: ''; position: absolute; left: 0; right: 0; bottom: -1px; height: 4px; background: #1a56b8; border-radius: 4px 4px 0 0; }

  .row { box-sizing: border-box; height: 60px; display: flex; align-items: center; padding: 0 24px 0 29px; border-bottom: 1px solid #ececec; font-size: 21px; color: #202124; font-weight: 700; white-space: nowrap; position: relative; }
  .rowstar { margin-left: 21px; color: #c6c6c6; padding-top: 3px; }
  .from { width: 300px; margin-left: 16px; letter-spacing: .95px; }
  .subject { flex: 1; width: 0; overflow: hidden; font-weight: 400; color: #5f6368; letter-spacing: .16px; }
  .subject b { font-weight: 700; color: #202124; letter-spacing: .66px; }
  .subject i { font-style: normal; margin: 0 8px 0 7px; }
  .subject em { font-style: normal; letter-spacing: 1.8px; margin: 0 4px 0 7px; }
  .subject em + span { letter-spacing: .21px; }
  .attach { width: 31px; color: #444746; }
  .date { width: 95px; text-align: right; font-size: 18px; letter-spacing: .45px; }
  .date.today { letter-spacing: -.5px; }
  .read { background: #f2f5fc; border-color: #e0e4ec; font-weight: 400; }
  .read .from { letter-spacing: .1px; }
  .read .subject b { font-weight: 400; letter-spacing: -.03px; }
  .read .subject i { margin: 0 7px 0 8px; }
  .read .date { color: #5f6368; letter-spacing: .1px; }
  .read .box { border-color: #c0c2c9; }
  .read .rowstar { color: #c0c2c9; }
  .sidepanel { width: 81px; padding-top: 28px; display: flex; flex-direction: column; align-items: center; gap: 56px; padding-left: 3px; box-sizing: border-box; }
  .cal { font: 500 12px Roboto, sans-serif; fill: #4285f4; }

  .sent { padding-left: 108px; width: 1968px; position: relative; }
  .sent .from { letter-spacing: .29px; }
  .sent::before { content: ''; position: absolute; z-index: 1; left: 0; top: 0; width: 384px; height: 11px; background: #f6f8fc; }
  .sliver { height: 7px; background: #f2f5fc; }

  .news { height: 257px; flex: none; background: #f7f7f7; position: relative; overflow: hidden; font-family: "Liberation Sans", Arial, sans-serif; }
  article { position: relative; box-sizing: border-box; width: 1470px; height: 257px; margin-left: 339px; background: #dedede; padding: 15px 0 0 30px; }
  h1 { font: 400 34px/42px "Liberation Serif", serif; color: #b90d0d; white-space: nowrap; letter-spacing: -.49px; -webkit-text-stroke: .35px #b90d0d; }
  .by { font-size: 19.5px; line-height: 34px; color: #b20f16; letter-spacing: .04px; }
  .by b { color: #333; }
  .by a { color: inherit; text-decoration: none; }
  .meta { display: flex; align-items: center; height: 32px; font-size: 18px; color: #666; }
  .bar { width: 2px; height: 22px; background: #bbb; margin: 0 12px 0 11px; }
  .meta svg { margin-right: 5px; }
  .lead { margin-top: 21px; font-size: 21px; line-height: 34px; color: #333; white-space: nowrap; }
  .ribbon { position: absolute; right: 30px; top: 2px; }
  .status { position: absolute; left: 0; bottom: 0; box-sizing: border-box; width: 783px; height: 31px; background: #323234; border-top: 1px solid #5a5a5e; color: #fbfbfe; font: 17.5px/30px "Open Sans", "Noto Sans", sans-serif; letter-spacing: -.14px; white-space: nowrap; overflow: hidden; }
  .edge { position: absolute; right: 0; top: 930px; width: 3px; height: 433px; background: #fdfdfd; }

  .taskbar { height: 72px; flex: none; box-sizing: border-box; border-top: 2px solid #41444d; position: relative; display: flex; justify-content: flex-end; background: linear-gradient(90deg, #1b2333 0, #17233f 180px, #10205a 400px, #0f1f5a 760px, #10244e 940px, #1d2036 1090px, #1c2042 1180px, #10205c 1310px, #121f50 1380px, #202126 1500px, #1f2128 1560px, #1c2130 1720px, #1c2130 1990px, #1e1f29 2157px); }
  .apps { display: flex; gap: 6px; padding-top: 4px; margin-right: 234px; }
  .app { width: 60px; height: 60px; display: flex; align-items: center; justify-content: center; position: relative; }
  .focus { background: #ffffff14; border-radius: 6px; box-shadow: inset 0 0 0 1px #ffffff0c; }
  .run { position: absolute; left: 26px; bottom: 1px; width: 9px; height: 5px; border-radius: 3px; background: #9a9cac; }
  .on { left: 18px; width: 24px; background: #56b8f7; }
  .badge { position: absolute; left: 30px; top: 4px; width: 24px; height: 24px; border-radius: 50%; background: #4cc2ff; color: #111; font: 17px/24px "Open Sans", sans-serif; text-align: center; }
  .ide { font: 700 11.5px "Liberation Mono", monospace; fill: #fff; }
  .tray { display: flex; align-items: center; color: #fff; margin-right: 35px; height: 68px; }
  .tray svg:nth-child(2) { margin-left: 28px; }
  .tray svg:nth-child(3) { margin-left: 26px; margin-top: 3px; }
  .tray svg:nth-child(4) { margin-left: 26px; }
  .tray svg:nth-child(5) { margin-left: 12px; }
  .tray svg:nth-child(6) { margin-left: 12px; }
  .clocktext { width: 105px; margin: -2px 13px 0 13px; display: flex; flex-direction: column; align-items: flex-end; font: 17.5px/24px "Open Sans", "Noto Sans", sans-serif; letter-spacing: -.1px; }
  .day2 { letter-spacing: .1px; }
</style>
